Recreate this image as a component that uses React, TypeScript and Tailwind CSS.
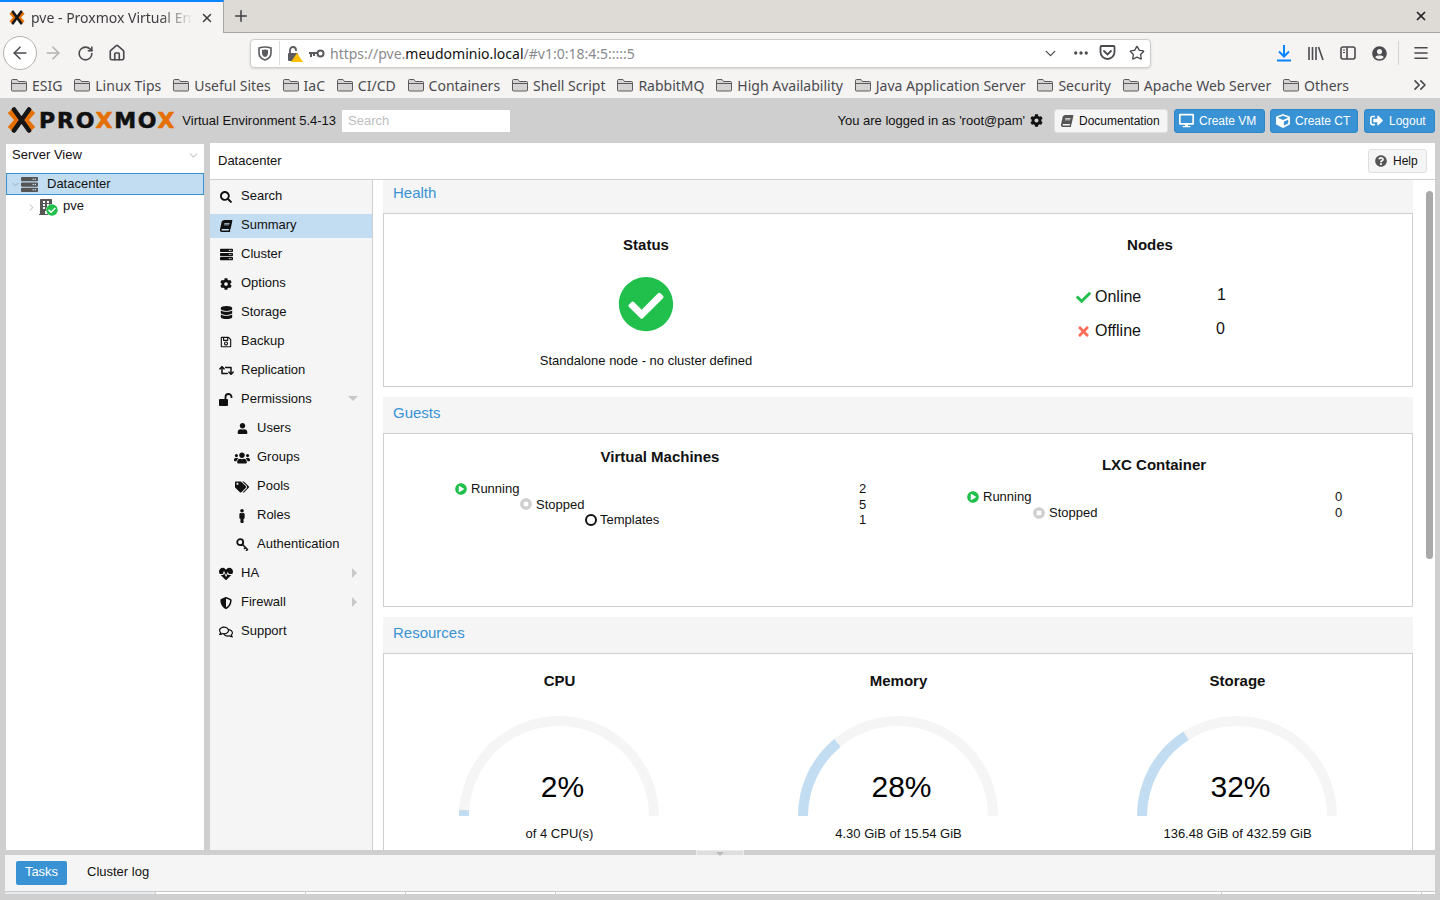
import type { ReactNode } from "react"
import { ArrowLeft, ArrowRight, ChevronDown, ChevronRight, ChevronsRight, Home, Menu, MoreHorizontal, Plus, RotateCw, Star, X } from "lucide-react"
import {
    FaBook, FaBuilding, FaCheck, FaCheckCircle, FaCog, FaCube, FaDatabase, FaDesktop, FaHeartbeat, FaMale,
    FaPlayCircle, FaQuestionCircle, FaRegComments, FaRegSave, FaRetweet, FaSearch, FaServer, FaShieldAlt,
    FaSignOutAlt, FaStopCircle, FaTags, FaTimes, FaUser, FaUserCircle, FaUsers,
} from "react-icons/fa"

const bookmarks = ["ESIG", "Linux Tips", "Useful Sites", "IaC", "CI/CD", "Containers", "Shell Script", "RabbitMQ", "High Availability", "Java Application Server", "Security", "Apache Web Server", "Others"]

function UnlockIcon({ color = "#111" }: { color?: string }) {
    return <svg width="14" height="13" viewBox="0 0 14 13">
        <rect x="0" y="6" width="9" height="7" rx="1" fill={color} />
        <path d="M6.5 6 V4 a3 3 0 0 1 6 0 V5" fill="none" stroke={color} strokeWidth="1.8" />
    </svg>
}

function KeyOutline() {
    return <svg width="13" height="13" viewBox="0 0 13 13" fill="none" stroke="#111">
        <circle cx="4.2" cy="4.2" r="3" strokeWidth="1.8" />
        <path d="M6.5 6.5 L12 12 M9.5 9.5 L8 11 M11.5 11.5 L10 13" strokeWidth="1.5" />
    </svg>
}

type MenuEntry = { label: string, icon: ReactNode, sub?: boolean, selected?: boolean, arrow?: "down" | "right" }

const menu: MenuEntry[] = [
    { label: "Search", icon: <FaSearch size={12} /> },
    { label: "Summary", icon: <FaBook size={12} className="-skew-x-12" />, selected: true },
    { label: "Cluster", icon: <FaServer size={13} /> },
    { label: "Options", icon: <FaCog size={12} /> },
    { label: "Storage", icon: <FaDatabase size={13} /> },
    { label: "Backup", icon: <FaRegSave size={12} /> },
    { label: "Replication", icon: <FaRetweet size={15} /> },
    { label: "Permissions", icon: <UnlockIcon />, arrow: "down" },
    { label: "Users", icon: <FaUser size={11} />, sub: true },
    { label: "Groups", icon: <FaUsers size={16} />, sub: true },
    { label: "Pools", icon: <FaTags size={14} />, sub: true },
    { label: "Roles", icon: <FaMale size={14} />, sub: true },
    { label: "Authentication", icon: <KeyOutline />, sub: true },
    { label: "HA", icon: <FaHeartbeat size={14} />, arrow: "right" },
    { label: "Firewall", icon: <FaShieldAlt size={12} />, arrow: "right" },
    { label: "Support", icon: <FaRegComments size={14} /> },
]

function FolderIcon() {
    return <svg width="16" height="14" viewBox="0 0 16 14" className="shrink-0">
        <path d="M0.5 2.5 Q0.5 1.5 1.5 1.5 H6 L7.5 3.5 H14.5 Q15.5 3.5 15.5 4.5 V12 Q15.5 13 14.5 13 H1.5 Q0.5 13 0.5 12 Z" fill="#d6d4d2" stroke="#5b5b5f" strokeWidth="1" />
        <path d="M0.5 5.5 H15.5" stroke="#5b5b5f" strokeWidth="1" />
    </svg>
}

function ProxmoxMark({ width = 29, height = 26 }: { width?: number, height?: number }) {
    return <svg width={width} height={height} viewBox="0 0 29 26" className="shrink-0">
        <path d="M3 4 L11 13 L3 22 M26 4 L18 13 L26 22" fill="none" stroke="#e57000" strokeWidth="6" />
        <path d="M7 2.5 L22 23.5 M22 2.5 L7 23.5" fill="none" stroke="#151515" strokeWidth="4.6" strokeLinecap="round" />
    </svg>
}

function Gauge({ percent }: { percent: number }) {
    const angle = Math.PI * (1 - percent / 100)
    const x = 100 + 95 * Math.cos(angle)
    const y = 100 - 95 * Math.sin(angle)
    return <svg width="200" height="100" viewBox="0 0 200 100" className="mx-auto block">
        <path d="M5 100 A95 95 0 0 1 195 100" fill="none" stroke="#f5f5f5" strokeWidth="10" />
        <path d={`M5 100 A95 95 0 0 1 ${x} ${y}`} fill="none" stroke="#c2ddf2" strokeWidth="10" />
    </svg>
}

function ResourceCol({ title, percent, text }: { title: string, percent: number, text: string }) {
    return <div className="text-center">
        <h3 className="pl-[2px] text-[15px] leading-5 font-bold text-[#111]">{title}</h3>
        <div className="relative mt-[25px]">
            <Gauge percent={percent} />
            <span className="absolute left-[8px] right-0 top-[53px] text-[30px] leading-9 text-black">{percent}%</span>
        </div>
        <p className="mt-[10px] pl-[2px] text-[13px] leading-4">{text}</p>
    </div>
}

function SectionHeader({ title, short }: { title: string, short?: boolean }) {
    return <div className={`flex items-center bg-[#f5f5f5] pl-[10px] text-[15px] text-[#3892d4] ${short ? "h-[33px] pb-[7px]" : "h-[36px] pb-[4px]"}`}>{title}</div>
}

function TopButton({ label, icon }: { label: string, icon: ReactNode }) {
    return <div className="flex h-6 items-center gap-[5px] rounded-[3px] border border-[#2f86c6] bg-[#3892d4] px-[4px] text-xs text-white">
        {icon}
        <span>{label}</span>
    </div>
}

export default function App() {
    return <div className="flex h-[900px] w-[1440px] flex-col overflow-hidden bg-[#cfcfcf] font-['Liberation_Sans',sans-serif] text-[13px] text-[#111]">

        {/* browser tabs */}
        <div className="flex h-[33px] shrink-0 items-stretch border-b border-[#a8a6a2] bg-[#dedbd7] font-['Noto_Sans',sans-serif] text-[#3d3d40]">
            <div className="-mb-px flex w-[224px] items-center border-t-2 border-r border-t-[#0a84ff] border-r-[#a8a6a2] bg-[#f5f4f2] pl-[9px]">
                <ProxmoxMark width={16} height={15} />
                <span className="ml-[6px] w-[162px] overflow-hidden whitespace-nowrap text-[14px] [mask-image:linear-gradient(to_right,black_80%,transparent)]">pve - Proxmox Virtual Environment</span>
                <X size={14} strokeWidth={2.5} className="ml-[7px]" />
            </div>
            <Plus size={18} strokeWidth={2} className="ml-[8px] self-center" />
            <X size={14} strokeWidth={3} className="ml-auto mr-[12px] self-center text-[#222]" />
        </div>

        {/* browser nav */}
        <div className="flex h-[37px] shrink-0 items-center bg-[#f5f4f2] pt-[3px] text-[#4a4a4f]">
            <div className="ml-[3px] flex h-[34px] w-[34px] items-center justify-center rounded-full border border-[#b5b3b0] bg-white">
                <ArrowLeft size={20} strokeWidth={1.8} />
            </div>
            <ArrowRight size={20} strokeWidth={1.8} className="ml-[6px] text-[#b1b1b3]" />
            <RotateCw size={17} strokeWidth={2.2} className="ml-[14px]" />
            <Home size={18} strokeWidth={2.2} className="ml-[14px]" />
            <div className="ml-[124px] flex h-[29px] w-[901px] items-center rounded-[4px] border border-[#cfcdca] bg-white shadow-sm">
                <svg width="14" height="15" viewBox="0 0 14 15" className="ml-[7px]">
                    <path d="M1 2 Q7 0 13 2 V7 Q13 12 7 14 Q1 12 1 7 Z" fill="none" stroke="#5b5b5f" strokeWidth="1.6" />
                    <path d="M4 4 Q7 3 10 4 V7 Q10 10 7 11 Q4 10 4 7 Z" fill="#5b5b5f" />
                </svg>
                <div className="ml-[7px] h-6 w-px bg-[#dcdcdc]" />
                <div className="relative ml-[8px] h-[15px] w-[14px]">
                    <svg width="12" height="15" viewBox="0 0 12 15">
                        <rect x="0" y="7" width="10" height="8" rx="1" fill="#5b5b5f" />
                        <path d="M2 7 V4 a3 3 0 0 1 6 0 V5" fill="none" stroke="#5b5b5f" strokeWidth="1.8" />
                    </svg>
                    <span className="absolute -bottom-px -right-[1px] h-0 w-0 border-x-[6px] border-b-[9px] border-x-transparent border-b-[#ffbf00]" />
                </div>
                <svg width="16" height="9" viewBox="0 0 16 9" className="ml-[7px]" fill="none" stroke="#5b5b5f" strokeWidth="2">
                    <circle cx="11.5" cy="4.5" r="3" />
                    <path d="M8.5 4 H0 M2 4 V8 M5 4 V7" />
                </svg>
                <span className="ml-[5px] w-[700px] whitespace-nowrap font-['Noto_Sans',sans-serif] text-[14px] text-[#8a8a8e]">https://pve.<span className="text-[#111]">meudominio.local</span>/#v1:0:18:4:5:::::5</span>
                <ChevronDown size={17} strokeWidth={1.8} className="ml-[12px]" />
                <MoreHorizontal size={18} strokeWidth={2.4} className="ml-[13px]" />
                <svg width="17" height="16" viewBox="0 0 17 16" className="ml-[9px]" fill="none" stroke="#4a4a4f" strokeWidth="1.8">
                    <path d="M1.5 2 Q1.5 1 2.5 1 H14.5 Q15.5 1 15.5 2 V7 A7 7 0 0 1 1.5 7 Z" />
                    <path d="M5 6 L8.5 9.5 L12 6" strokeLinecap="round" />
                </svg>
                <Star size={16} strokeWidth={2} className="ml-[13px]" />
            </div>
            <svg width="16" height="18" viewBox="0 0 16 18" className="ml-[125px]" fill="none" stroke="#0a84ff" strokeWidth="2">
                <path d="M8 1 V12 M3 7.5 L8 12.5 L13 7.5" />
                <path d="M1 16.5 H15" />
            </svg>
            <svg width="16" height="15" viewBox="0 0 16 15" className="ml-[16px]" fill="none" stroke="#4a4a4f" strokeWidth="1.6">
                <path d="M1 1 V14 M4.5 1 V14 M8 1 V14 M10.5 1 L15 14" />
            </svg>
            <svg width="16" height="14" viewBox="0 0 16 14" className="ml-[16px]" fill="none" stroke="#4a4a4f" strokeWidth="1.6">
                <rect x="1" y="1" width="14" height="12" rx="2" />
                <path d="M7 1 V13" />
                <path d="M3 4 H5 M3 6.5 H5" strokeWidth="1" />
            </svg>
            <FaUserCircle size={15} className="ml-[16px]" />
            <div className="ml-[11px] h-6 w-px bg-[#d5d3d0]" />
            <Menu size={18} strokeWidth={2.2} className="ml-[12px] w-[20px]" />
        </div>

        {/* bookmarks */}
        <div className="flex h-[28px] shrink-0 items-center gap-[12px] bg-[#f5f4f2] pl-[11px] pt-[2px] font-['Noto_Sans',sans-serif] text-[14px] text-[#4a4a4f]">
            {bookmarks.map(name => <div key={name} className="-mr-[0.15px] flex items-center gap-[5px] whitespace-nowrap">
                <FolderIcon />
                <span>{name}</span>
            </div>)}
            <ChevronsRight size={20} strokeWidth={2} className="ml-auto mr-[10px]" />
        </div>

        {/* pve header */}
        <div className="flex h-[45px] shrink-0 items-center pl-[7px] pr-[5px]">
            <div className="-mt-[2px]"><ProxmoxMark /></div>
            <span className="ml-[3px] font-['DejaVu_Sans',sans-serif] text-[22px] leading-none font-bold tracking-[1.8px] text-[#111] [-webkit-text-stroke:0.6px]">PRO<span className="text-[#e57000]">X</span>MO<span className="text-[#e57000]">X</span></span>
            <span className="ml-[6px]">Virtual Environment 5.4-13</span>
            <div className="ml-[6px] flex h-[22px] w-[168px] items-center bg-white pl-[6px] text-[#bdbdbd]">Search</div>
            <span className="ml-auto">You are logged in as 'root@pam'</span>
            <FaCog size={13} className="ml-[5px]" />
            <div className="ml-[11px] flex h-6 w-[114px] items-center gap-[6px] rounded-[3px] border border-[#e0e0e0] bg-[#f5f5f5] pl-[6px] text-xs">
                <FaBook size={12} className="-skew-x-12 text-[#555]" />
                <span>Documentation</span>
            </div>
            <div className="ml-[6px] w-[91px]"><TopButton label="Create VM" icon={<FaDesktop size={15} />} /></div>
            <div className="ml-[5px] w-[88px]"><TopButton label="Create CT" icon={<FaCube size={14} className="ml-[1px]" />} /></div>
            <div className="ml-[6px] w-[71px]"><TopButton label="Logout" icon={<FaSignOutAlt size={13} className="mx-[1px]" />} /></div>
        </div>

        {/* main */}
        <div className="flex h-[707px] shrink-0 gap-[6px] pl-[6px]">

            <div className="mt-px flex w-[198px] flex-col">
                <div className="flex h-[22px] shrink-0 items-center justify-between bg-white pl-[6px] pr-[4px]">
                    <span>Server View</span>
                    <ChevronDown size={13} strokeWidth={1.2} className="text-[#888]" />
                </div>
                <div className="flex-1 bg-white pt-[7px]">
                    <div className="flex h-[22px] items-center border border-[#3892d4] bg-[#c2ddf2] pl-[3px]">
                        <ChevronDown size={11} strokeWidth={1.5} className="text-[#8a9aa8]" />
                        <FaServer size={17} className="text-[#555]" />
                        <span className="ml-[9px]">Datacenter</span>
                    </div>
                    <div className="mt-px flex h-[22px] items-center pl-[20px]">
                        <ChevronRight size={11} strokeWidth={1.5} className="text-[#999]" />
                        <div className="relative ml-[1px] h-[17px] w-[20px]">
                            <FaBuilding size={16} className="text-[#555]" />
                            <FaCheckCircle size={12} className="absolute bottom-0 right-0 rounded-full bg-white text-[#21bf4b]" />
                        </div>
                        <span className="ml-[5px] -translate-y-px">pve</span>
                    </div>
                </div>
            </div>

            <div className="flex w-[1225px] flex-col bg-white">
                <div className="flex h-[37px] shrink-0 items-center justify-between border-b border-[#cfcfcf] pl-[8px] pr-[8px]">
                    <span>Datacenter</span>
                    <div className="flex h-6 w-[59px] items-center gap-[6px] rounded-[3px] border border-[#e0e0e0] bg-[#f5f5f5] pl-[6px] text-xs">
                        <FaQuestionCircle size={12} className="text-[#555]" />
                        <span>Help</span>
                    </div>
                </div>

                <div className="flex min-h-0 flex-1">
                    <div className="w-[163px] shrink-0 border-r border-[#cfcfcf] bg-[#f5f5f5] pt-[1px]">
                        {menu.map(item => <div key={item.label} className={`flex h-[29px] items-center ${item.selected ? "relative" : ""}`}>
                            {item.selected && <div className="absolute inset-x-0 top-[4px] bottom-[1px] bg-[#c2ddf2]" />}
                            <span className={`relative flex w-[16px] translate-y-[1px] justify-center ${item.sub ? "ml-[24px]" : "ml-[8px]"}`}>{item.icon}</span>
                            <span className="relative ml-[7px] -translate-y-[0.5px]">{item.label}</span>
                            {item.arrow === "down" && <span className="ml-auto mr-[14px] h-0 w-0 border-x-[5px] border-t-[5px] border-x-transparent border-t-[#c8c8c8]" />}
                            {item.arrow === "right" && <span className="ml-auto mr-[15px] h-0 w-0 border-y-[5px] border-l-[5px] border-y-transparent border-l-[#c8c8c8]" />}
                        </div>)}
                    </div>

                    <div className="relative min-w-0 flex-1 overflow-hidden pl-[10px]">
                        <div className="w-[1030px]">
                            <SectionHeader title="Health" short />
                            <div className="h-[174px] border border-[#cfcfcf] px-[10px] pt-[21px]">
                                <div className="grid grid-cols-2">
                                    <div className="text-center">
                                        <h3 className="text-[15px] leading-5 font-bold">Status</h3>
                                        <FaCheckCircle size={56} className="mx-auto mt-[21px] text-[#21bf4b]" />
                                        <p className="mt-[21px] leading-4">Standalone node - no cluster defined</p>
                                    </div>
                                    <div>
                                        <h3 className="text-center text-[15px] leading-5 font-bold">Nodes</h3>
                                        <div className="mt-[25px] pl-[178px] text-base">
                                            <div className="flex h-[34px] items-center">
                                                <FaCheck size={15} className="w-[19px] pr-[4px] text-[#21bf4b]" />
                                                <span className="w-[122px]">Online</span>
                                                <span className="-translate-y-[2px]">1</span>
                                            </div>
                                            <div className="flex h-[34px] items-center">
                                                <FaTimes size={15} className="w-[19px] pr-[4px] text-[#ff6c59]" />
                                                <span className="w-[121px]">Offline</span>
                                                <span className="-translate-y-[2px]">0</span>
                                            </div>
                                        </div>
                                    </div>
                                </div>
                            </div>

                            <div className="mt-[10px]"><SectionHeader title="Guests" /></div>
                            <div className="h-[174px] border border-[#cfcfcf] pl-[29px]">
                                <div className="grid grid-cols-[494px_494px]">
                                    <div className="pt-[13px]">
                                        <h3 className="text-center text-[15px] leading-5 font-bold">Virtual Machines</h3>
                                        <div className="mt-[14px] flex pl-[42px]">
                                            <div className="w-[404px]">
                                                <div className="flex h-[15.5px] items-center gap-[4px]"><FaPlayCircle size={12} className="text-[#21bf4b]" />Running</div>
                                                <div className="ml-[65px] flex h-[15.5px] items-center gap-[4px]"><FaStopCircle size={12} className="text-[#cfcfcf]" />Stopped</div>
                                                <div className="ml-[130px] flex h-[15.5px] items-center gap-[3px]"><span className="h-3 w-3 rounded-full border-2 border-[#111]" />Templates</div>
                                            </div>
                                            <div className="leading-[15.5px]">
                                                <div>2</div>
                                                <div>5</div>
                                                <div>1</div>
                                            </div>
                                        </div>
                                    </div>
                                    <div className="pt-[21px]">
                                        <h3 className="text-center text-[15px] leading-5 font-bold">LXC Container</h3>
                                        <div className="mt-[14px] flex pl-[60px]">
                                            <div className="w-[368px]">
                                                <div className="flex h-4 items-center gap-[4px]"><FaPlayCircle size={12} className="text-[#21bf4b]" />Running</div>
                                                <div className="ml-[66px] flex h-4 items-center gap-[4px]"><FaStopCircle size={12} className="text-[#cfcfcf]" />Stopped</div>
                                            </div>
                                            <div className="leading-4">
                                                <div>0</div>
                                                <div>0</div>
                                            </div>
                                        </div>
                                    </div>
                                </div>
                            </div>

                            <div className="mt-[10px]"><SectionHeader title="Resources" /></div>
                            <div className="h-[200px] border border-[#cfcfcf] pl-[5px] pt-[17px]">
                                <div className="grid grid-cols-[339px_339px_339px]">
                                    <ResourceCol title="CPU" percent={2} text="of 4 CPU(s)" />
                                    <ResourceCol title="Memory" percent={28} text="4.30 GiB of 15.54 GiB" />
                                    <ResourceCol title="Storage" percent={32} text="136.48 GiB of 432.59 GiB" />
                                </div>
                            </div>
                        </div>

                        <div className="absolute right-[2px] top-[11px] h-[368px] w-[7px] rounded-full bg-[#a9a9a9]" />
                    </div>
                </div>
            </div>
        </div>

        {/* tasks */}
        <div className="relative mx-[5px] mt-[5px] flex h-[36px] shrink-0 items-center border-0 bg-[#f5f5f5] pl-[11px]">
            <div className="absolute left-[691px] -top-[5px] flex h-[5px] w-[48px] justify-center border-x border-t border-[#ececec] bg-[#dedede]">
                <span className="mt-[1px] h-0 w-0 border-x-[4px] border-t-[4px] border-x-transparent border-t-[#bbb]" />
            </div>
            <div className="flex h-6 w-[51px] items-center justify-center rounded-[2px] bg-[#3892d4] pb-[2px] text-white">Tasks</div>
            <span className="ml-[20px] -translate-y-[1px]">Cluster log</span>
        </div>
        <div className="mx-[5px] flex h-[3px] shrink-0 border-t border-[#c8c8c8]">
            <div className="w-[151px] border-r border-[#cfcfcf] bg-[#e6ebef]" />
            <div className="w-[150px] border-r border-[#cfcfcf] bg-white" />
            <div className="w-[100px] border-r border-[#cfcfcf] bg-white" />
            <div className="w-[150px] border-r border-[#cfcfcf] bg-white" />
            <div className="w-[666px] border-r border-[#cfcfcf] bg-white" />
            <div className="w-[200px] border-r border-[#cfcfcf] bg-white" />
            <div className="flex-1 bg-white" />
        </div>
    </div>
}
